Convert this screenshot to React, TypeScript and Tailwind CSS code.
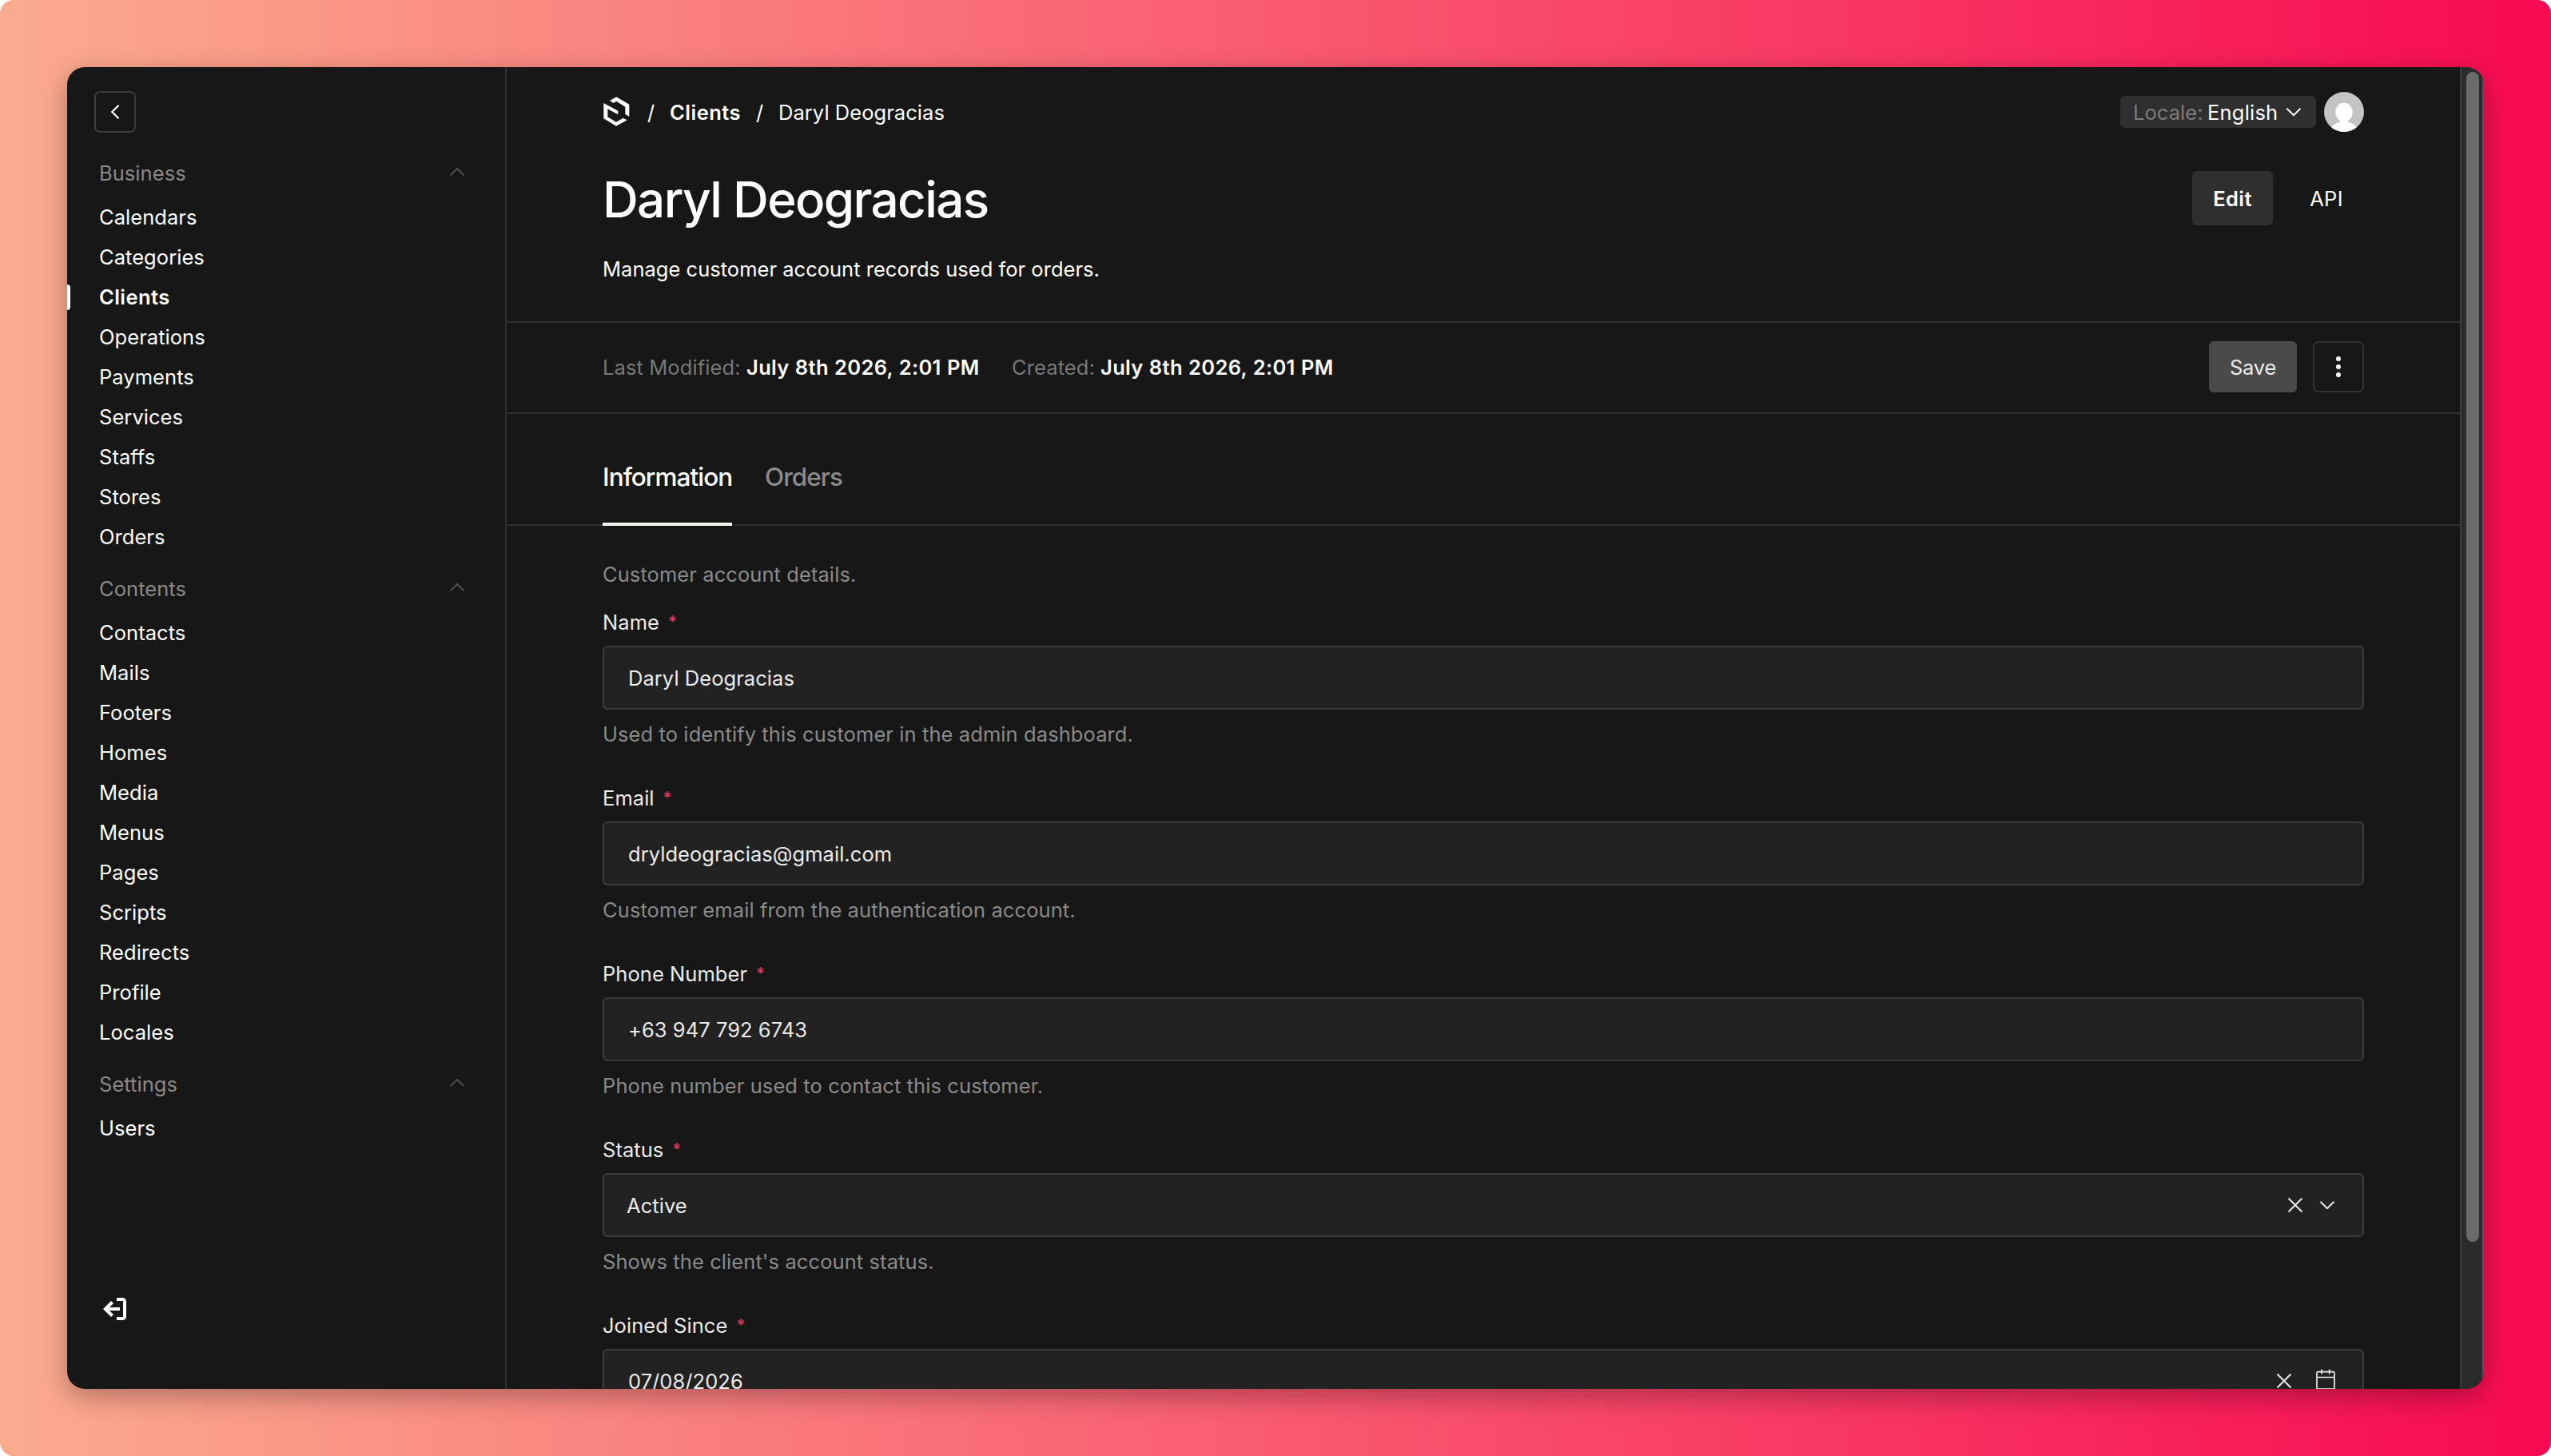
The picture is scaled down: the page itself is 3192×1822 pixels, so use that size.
import type { ReactNode } from 'react';

type Group = { title: string; items: string[]; active?: string };

const groups: Group[] = [
  {
    title: 'Business',
    items: ['Calendars', 'Categories', 'Clients', 'Operations', 'Payments', 'Services', 'Staffs', 'Stores', 'Orders'],
    active: 'Clients',
  },
  {
    title: 'Contents',
    items: ['Contacts', 'Mails', 'Footers', 'Homes', 'Media', 'Menus', 'Pages', 'Scripts', 'Redirects', 'Profile', 'Locales'],
  },
  { title: 'Settings', items: ['Users'] },
];

function Chevron({ className = '' }: { className?: string }) {
  return (
    <svg viewBox="0 0 22 22" className={`h-[22px] w-[22px] shrink-0 ${className}`} fill="none" stroke="currentColor" strokeWidth="2">
      <path d="M2.5 6.8 11 15.2 19.5 6.8" />
    </svg>
  );
}

function ClearIcon() {
  return (
    <svg viewBox="0 0 22 22" className="h-[22px] w-[22px] shrink-0" fill="none" stroke="currentColor" strokeWidth="2">
      <path d="M2.5 2.5l17 17M19.5 2.5l-17 17" />
    </svg>
  );
}

function CalendarIcon() {
  return (
    <svg viewBox="0 0 28 30" className="h-[30px] w-[28px] shrink-0" fill="none" stroke="currentColor" strokeWidth="1.7">
      <rect x="3" y="3.6" width="22" height="21.6" rx="1.5" />
      <path d="M3 10.5h22M9.1 0.4v6M18.7 0.4v6" />
    </svg>
  );
}

function Logo() {
  return (
    <svg viewBox="45 34 99 111" className="mt-[6px] ml-px h-[37px] w-[33px] shrink-0 fill-white">
      <path d="M69 49 94 35 142 63V108L127 100V72L94 51 83 58Z" />
      <path d="M46 58 100 87V101L61 80V110L93 129 119 114 134 122 93 144 46 116Z" />
    </svg>
  );
}

function Avatar() {
  return (
    <div className="ml-[10px] h-[50px] w-[50px] shrink-0 overflow-hidden rounded-full bg-[#c4c4c4]">
      <svg viewBox="0 0 50 50" className="h-full w-full fill-white">
        <ellipse cx="25" cy="25.4" rx="10.7" ry="11.7" />
        <path d="M8 46C12 40 17 38.6 20 37.8V34h10v3.8C33 38.6 38 40 42 46V50H8Z" />
      </svg>
    </div>
  );
}

function Sidebar() {
  return (
    <aside className="flex w-[550px] shrink-0 flex-col border-r-2 border-[#2f2f2f]">
      <button className="mt-[30px] ml-[34px] flex h-[52px] w-[52px] items-center justify-center rounded-[7px] border-2 border-[#3c3c3c]">
        <svg viewBox="0 0 24 24" className="h-6 w-6" fill="none" stroke="white" strokeWidth="2.2">
          <path d="M16.5 3.8 8.3 12 16.5 20.2" />
        </svg>
      </button>
      <nav className="mt-[21px] flex flex-col gap-[10px]">
        {groups.map((g) => (
          <div key={g.title}>
            <div className="flex h-[60px] items-center justify-between pr-[50px] pb-px pl-[40px] text-[#898989]">
              <span>{g.title}</span>
              <svg viewBox="0 0 20 21" className="h-[21px] w-5" fill="none" stroke="#4f4f4f" strokeWidth="2">
                <path d="M1.5 13.2 10 5 18.5 13.2" />
              </svg>
            </div>
            {g.items.map((item) =>
              item === g.active ? (
                <div key={item} className="flex h-[50px] items-center pb-px font-semibold tracking-[0.45px] text-white">
                  <span className="mt-px mr-[36px] h-8 w-1 rounded-r-[4px] bg-white" />
                  {item}
                </div>
              ) : (
                <div key={item} className="flex h-[50px] items-center pb-px pl-[40px] text-white">
                  {item}
                </div>
              ),
            )}
          </div>
        ))}
      </nav>
      <svg viewBox="0 0 30 30" className="mt-auto mb-[85px] ml-[44px] h-[30px] w-[30px]" fill="none" stroke="white" strokeWidth="4">
        <path d="M22 15H4M12.5 6.5 4 15l8.5 8.5" strokeWidth="4.2" />
        <path d="M18 3h7.5a2.500 2.500 0 0 1 2.500 2.500v19a2.500 2.500 0 0 1-2.500 2.500H18" />
      </svg>
    </aside>
  );
}

function Header() {
  return (
    <header className="flex h-[320px] flex-col border-b-2 border-[#2f2f2f] px-[120px] text-white">
      <div className="mt-[31px] flex h-[51px] items-start justify-between">
        <div className="flex items-start">
          <Logo />
          <span className="mt-[10px] ml-[22px] w-7">/</span>
          <span className="mt-[10px] w-[108px] font-semibold tracking-[0.5px]">Clients</span>
          <span className="mt-[10px] w-7">/</span>
          <span className="mt-[10px]">Daryl Deogracias</span>
        </div>
        <div className="flex items-start">
          <div className="mt-[5px] flex h-10 w-[245px] items-start rounded-[6px] bg-[#2f2f2f] pt-[5px] pl-4">
            <span className="w-[93px]  text-[#7c7c7c]">Locale:</span>
            <span className="w-[97px] tracking-[0.2px]">English</span>
            <Chevron className="mt-1" />
          </div>
          <Avatar />
        </div>
      </div>
      <div className="mt-[46px] flex h-[75px] items-start justify-between">
        <h1 className="text-[62px] leading-[75px] font-medium tracking-[-1.65px]">Daryl Deogracias</h1>
        <div className="mt-[2px] flex gap-5">
          <div className="h-[68px] w-[101px] rounded-[6px] bg-[#2f2f2f] pt-[19px] text-center font-semibold tracking-[0.4px]">Edit</div>
          <div className="h-[68px] w-[94px] pt-[19px] text-center tracking-[0.3px]">API</div>
        </div>
      </div>
      <p className="mt-[34px] tracking-[0.02px]">Manage customer account records used for orders.</p>
    </header>
  );
}

function DocumentControls() {
  return (
    <div className="flex h-[114px] items-start justify-between border-b-2 border-[#2f2f2f] px-[120px]">
      <div className="flex pt-[40px]">
        <span className="w-[180px] tracking-[0.1px] text-[#787878]">Last Modified:</span>
        <span className="w-[332px] font-semibold tracking-[0.35px] text-white [word-spacing:0.4px]">July 8th 2026, 2:01 PM</span>
        <span className="w-[111px] tracking-[0.1px] text-[#787878]">Created:</span>
        <span className="font-semibold tracking-[0.35px] text-white [word-spacing:0.4px]">July 8th 2026, 2:01 PM</span>
      </div>
      <div className="flex gap-5 pt-[23px]">
        <button className="flex h-16 w-[110px] items-start justify-center rounded-[6px] bg-[#4a4a4a] pt-[17px] tracking-[-0.2px] text-[#ebebeb]">
          Save
        </button>
        <button className="flex h-16 w-16 flex-col items-center justify-center gap-[4px] rounded-[7px] border-2 border-[#333333]">
          <span className="h-[6px] w-[6px] rounded-full bg-white" />
          <span className="h-[6px] w-[6px] rounded-full bg-white" />
          <span className="h-[6px] w-[6px] rounded-full bg-white" />
        </button>
      </div>
    </div>
  );
}

function Tabs() {
  return (
    <div className="flex h-[140px] gap-[41px] border-b-2 border-[#2f2f2f] px-[120px] text-[31.5px] leading-[39px] font-medium tracking-[-0.95px]">
      <div className="h-[140px] w-[162px] shrink-0 border-b-4 border-[#f3f3f0] pt-[59px] whitespace-nowrap text-white">Information</div>
      <div className="pt-[59px] tracking-[-1px] text-[#8a8a8a]">Orders</div>
    </div>
  );
}

function Field({ label, value, hint, icons, pad = 'pl-[30px]' }: { label: string; value: string; hint?: string; icons?: ReactNode; pad?: string }) {
  return (
    <div className="flex shrink-0 flex-col">
      <div className="flex items-start text-[#ebebeb]">
        <span>{label}</span>
        <span className="mt-[3px] ml-[11px] text-[21px] leading-[25px] font-medium text-[#da3a5c]">*</span>
      </div>
      <div className={`mt-[14px] flex h-20 items-center justify-between rounded-[6px] border-2 border-[#3c3c3c] bg-[#222222] text-[#ebebeb] ${pad}`}>
        <span className="pt-px">{value}</span>
        {icons}
      </div>
      {hint && <p className="mt-[15px] mb-[49px] tracking-[0.09px] text-[#8a8a8a]">{hint}</p>}
    </div>
  );
}

export default function App() {
  return (
    <div className="h-[1822px] w-[3192px] overflow-hidden bg-white">
      <div className="h-full w-full rounded-[17px] bg-linear-to-r/srgb from-[#fbab8f] to-[#f80a52] p-[84px]">
        <div className="h-[1654px] w-[3024px] rounded-[22px] shadow-[0_10px_34px_rgba(0,0,0,0.3)]">
          <div className="flex h-full w-full overflow-hidden rounded-[22px] bg-[#171717] font-['Inter',sans-serif] text-[25.5px] leading-[31px] tracking-[0.05px] whitespace-nowrap">
            <Sidebar />
            <main className="flex h-full min-w-0 flex-1 flex-col overflow-hidden">
              <Header />
              <DocumentControls />
              <Tabs />
              <section className="flex min-h-0 flex-1 flex-col overflow-hidden px-[120px] pt-[45px]">
                <p className="mb-[29px] tracking-[0.08px] text-[#8a8a8a]">Customer account details.</p>
                <Field label="Name" value="Daryl Deogracias" hint="Used to identify this customer in the admin dashboard." />
                <Field label="Email" value="dryldeogracias@gmail.com" hint="Customer email from the authentication account." />
                <Field label="Phone Number" value="+63 947 792 6743" hint="Phone number used to contact this customer." />
                <Field
                  label="Status"
                  value="Active"
                  hint="Shows the client's account status."
                  pad="pl-[28px]"
                  icons={
                    <div className="flex items-center gap-[18px] pr-[33px]">
                      <ClearIcon />
                      <Chevron />
                    </div>
                  }
                />
                <Field
                  label="Joined Since"
                  value="07/08/2026"
                  icons={
                    <div className="flex items-center gap-[27px] pr-[32px]">
                      <ClearIcon />
                      <CalendarIcon />
                    </div>
                  }
                />
              </section>
            </main>
            <div className="w-[30px] shrink-0 border-r-2 border-l-2 border-r-[#555555] border-l-[#3c3c3c] bg-[#2b2b2b] pt-[6px] pl-[6px]">
              <div className="h-[1464px] w-4 rounded-full bg-[#6b6b6b]" />
            </div>
          </div>
        </div>
      </div>
    </div>
  );
}
